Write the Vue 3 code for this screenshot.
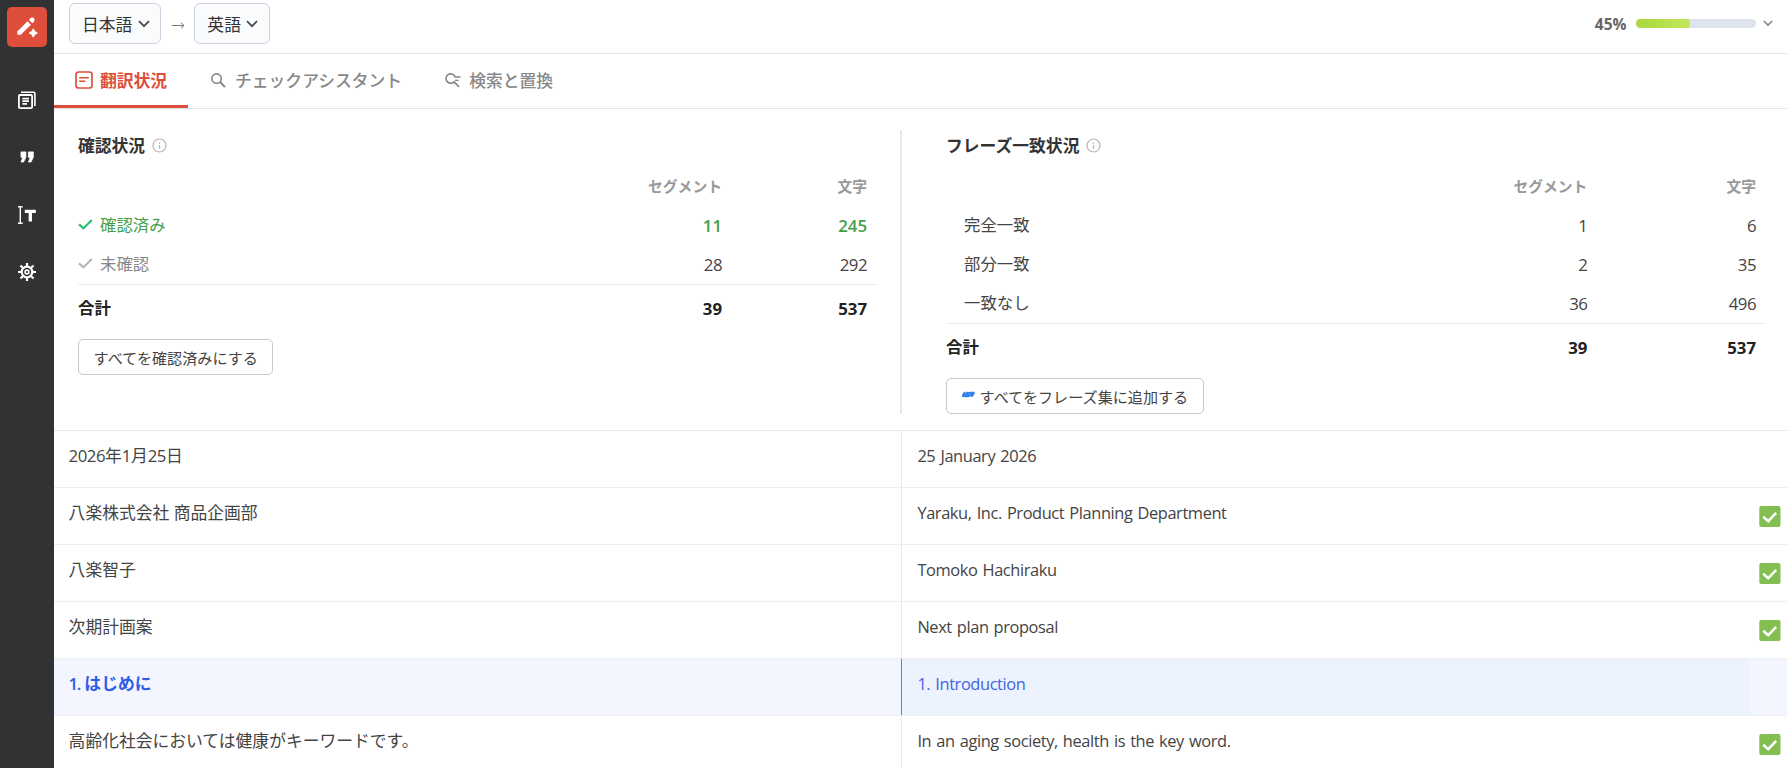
<script setup>
const rows = [
  { id: 1, source: '2026年1月25日', target: '25 January 2026', confirmed: false },
  { id: 2, source: '八楽株式会社 商品企画部', target: 'Yaraku, Inc. Product Planning Department', confirmed: true },
  { id: 3, source: '八楽智子', target: 'Tomoko Hachiraku', confirmed: true },
  { id: 4, source: '次期計画案', target: 'Next plan proposal', confirmed: true },
  { id: 5, source: '1. はじめに', target: '1. Introduction', confirmed: false, active: true },
  { id: 6, source: '高齢化社会においては健康がキーワードです。', target: 'In an aging society, health is the key word.', confirmed: true },
]

// Splits a text into Latin and Japanese runs so each can be spaced on its own
const runs = (text) =>
  (text.match(/[\x21-\x7e]+|[^\x21-\x7e]+/g) || []).map((t) => ({ t, latin: /[\x21-\x7e]/.test(t) }))

const matches = [
  { label: '完全一致', segments: 1, chars: 6 },
  { label: '部分一致', segments: 2, chars: 35 },
  { label: '一致なし', segments: 36, chars: 496 },
]

const progress = 45
</script>

<template>
  <div class="app">
    <nav class="sidebar">
      <div class="logo">
        <svg width="40" height="40" viewBox="0 0 40 40">
          <path d="M12.6 25.6 L22.2 16" stroke="#fff" stroke-width="4.8" fill="none" />
          <path d="M10.6 24.6 L11.5 23.6 L14.6 26.7 L13.6 27.6 H10.6 Z" fill="#fff" stroke="#fff" stroke-width=".5" stroke-linejoin="round" />
          <path d="M23.7 14.5 L25.2 13" stroke="#fff" stroke-width="4.8" />
          <circle cx="25.2" cy="12.8" r="2.4" fill="#fff" />
          <path d="M26.3 22.4 Q26.9 25.4 29.9 26 Q26.9 26.6 26.3 29.6 Q25.7 26.6 22.7 26 Q25.7 25.4 26.3 22.4 Z" fill="#fff" stroke="#fff" stroke-width="1.5" stroke-linejoin="round" />
        </svg>
      </div>
      <svg class="nav-icon" viewBox="0 0 18 18" fill="none" stroke="#fff">
        <rect x=".9" y="4" width="13.2" height="13.1" rx="1.2" stroke-width="1.8" />
        <path d="M3 1.2 H15.6 Q16.9 1.2 16.9 2.5 V15" stroke-width="1.6" />
        <path d="M4.4 7.6 H11 M4.4 10.2 H11 M4.4 12.9 H9" stroke-width="1.7" />
      </svg>
      <svg class="nav-icon" viewBox="0 0 18 18" fill="#fff">
        <path d="M3 3.9 H7.9 V9.2 L5.6 14 H3 L4.9 9.4 H3 Z" stroke="#fff" stroke-width=".8" stroke-linejoin="round" />
        <path d="M10.4 3.9 H15.3 V9.2 L13 14 H10.4 L12.3 9.4 H10.4 Z" stroke="#fff" stroke-width=".8" stroke-linejoin="round" />
      </svg>
      <svg class="nav-icon" viewBox="0 0 18 18" fill="none" stroke="#fff">
        <path d="M2.3 .8 V17.2 M0 .8 H4.7 M0 17.2 H4.7" stroke-width="1.4" />
        <path d="M6.8 5.4 H17.8 M12.3 5 V15.4" stroke-width="3.3" />
      </svg>
      <svg class="nav-icon" viewBox="0 0 18 18" fill="none" stroke="#fff">
        <circle cx="9" cy="9" r="5.3" stroke-width="2.2" />
        <circle cx="9" cy="9" r="1.9" stroke-width="1.6" />
        <path d="M9 0 V3.4 M9 14.6 V18 M0 9 H3.4 M14.6 9 H18 M2.5 2.5 L5 5 M13 13 L15.5 15.5 M2.5 15.5 L5 13 M13 5 L15.5 2.5" stroke-width="2.2" />
      </svg>
    </nav>

    <main class="main">
      <header class="topbar">
        <button class="lang">
          日本語
          <svg width="12" height="8" viewBox="0 0 12 8"><path d="M1 1.2 L6 6.2 L11 1.2" fill="none" stroke="#4a4a4a" stroke-width="1.8" /></svg>
        </button>
        <svg class="arrow" width="13" height="7" viewBox="0 0 13 7"><path d="M0 3.5 H12 M9 .8 L12 3.5 L9 6.2" fill="none" stroke="#777" stroke-width="1" /></svg>
        <button class="lang">
          英語
          <svg width="12" height="8" viewBox="0 0 12 8"><path d="M1 1.2 L6 6.2 L11 1.2" fill="none" stroke="#4a4a4a" stroke-width="1.8" /></svg>
        </button>
        <div class="progress">
          <span class="percent">{{ progress }}%</span>
          <div class="bar"><div class="fill" :style="{ width: progress + '%' }"></div></div>
          <svg width="10" height="7" viewBox="0 0 10 7"><path d="M.8 1 L5 5 L9.2 1" fill="none" stroke="#888" stroke-width="1.7" /></svg>
        </div>
      </header>

      <div class="tabs">
        <div class="tab active">
          <svg width="18" height="18" viewBox="0 0 18 18" fill="none" stroke="#de4f3b">
            <rect x="1" y="1" width="16" height="16" rx="2.6" stroke-width="1.7" />
            <path d="M4.2 6.7 H13.8 M4.2 10.2 H10.4" stroke-width="1.5" />
          </svg>
          <span>翻訳状況</span>
        </div>
        <div class="tab check">
          <svg width="15" height="15" viewBox="0 0 15 15" fill="none" stroke="#888">
            <circle cx="5.6" cy="5.6" r="4.7" stroke-width="1.6" />
            <path d="M9 9 L14 14" stroke-width="1.9" />
          </svg>
          <span>チェックアシスタント</span>
        </div>
        <div class="tab replace">
          <svg width="16" height="15" viewBox="0 0 16 15" fill="none" stroke="#888">
            <path d="M10 3.6 A4.7 4.7 0 1 0 9.6 8.2" stroke-width="1.6" />
            <path d="M8.8 8.6 L14 13.8" stroke-width="1.8" />
            <path d="M9.4 4 H15.6 M10 7.4 H13.6" stroke-width="1.4" />
          </svg>
          <span>検索と置換</span>
        </div>
      </div>

      <section class="panel">
        <div class="stats left">
          <h2>
            確認状況
            <svg width="15" height="15" viewBox="0 0 15 15" fill="none" stroke="#b5b5b5"><circle cx="7.5" cy="7.5" r="6.5" stroke-width="1.2" /><path d="M7.5 4.6 V6 M7.5 7 V10.8" stroke-width="1.2" /></svg>
          </h2>
          <div class="grid head"><span></span><span>セグメント</span><span>文字</span></div>
          <div class="grid done">
            <span class="label"><svg width="15" height="11" viewBox="0 0 15 11"><path d="M1 5.4 L5.4 9.4 L13.8 1" fill="none" stroke="#22c06a" stroke-width="2.1" /></svg>確認済み</span>
            <b>11</b><b>245</b>
          </div>
          <div class="grid todo">
            <span class="label"><svg width="15" height="11" viewBox="0 0 15 11"><path d="M1 5.4 L5.4 9.4 L13.8 1" fill="none" stroke="#b5b5b5" stroke-width="2.1" /></svg>未確認</span>
            <span>28</span><span>292</span>
          </div>
          <div class="grid total"><span>合計</span><b>39</b><b>537</b></div>
          <button class="action">すべてを確認済みにする</button>
        </div>

        <div class="divider"></div>

        <div class="stats right">
          <h2>
            フレーズ一致状況
            <svg width="15" height="15" viewBox="0 0 15 15" fill="none" stroke="#b5b5b5"><circle cx="7.5" cy="7.5" r="6.5" stroke-width="1.2" /><path d="M7.5 4.6 V6 M7.5 7 V10.8" stroke-width="1.2" /></svg>
          </h2>
          <div class="grid head"><span></span><span>セグメント</span><span>文字</span></div>
          <div v-for="m in matches" :key="m.label" class="grid">
            <span class="label indent">{{ m.label }}</span><span>{{ m.segments }}</span><span>{{ m.chars }}</span>
          </div>
          <div class="grid total"><span>合計</span><b>39</b><b>537</b></div>
          <button class="action">
            <svg class="quotes" width="13" height="7" viewBox="0 0 13 7" fill="#2f80ed">
              <path d="M0 6 Q-.2 2.4 2.4 .8 L3.6 .8 L3.2 1.9 L5.6 .6 L6.6 1.3 L9 .4 L10 1 L12 .4 Q13.6 2 12 4 Q11 6 8.8 6.3 L9 5 L6.6 6.2 Z" />
              <path d="M3.4 3.4 L4.2 2.4 M8.2 2.6 L7.4 4.2" stroke="#a8cbfb" stroke-width=".6" />
            </svg>
            <span>すべてをフレーズ集に追加する</span>
          </button>
        </div>
      </section>

      <section class="segments">
        <div v-for="row in rows" :key="row.id" class="row" :class="{ active: row.active }">
          <div class="source"><span v-for="(r, i) in runs(row.source)" :key="i" :class="{ latin: r.latin }">{{ r.t }}</span></div>
          <div class="target">{{ row.target }}</div>
          <div class="status">
            <svg v-if="row.confirmed" width="22" height="21" viewBox="0 0 22 21">
              <rect x=".3" width="21.2" height="21" rx="2" fill="#82bf50" />
              <path d="M4.2 10.7 L9.2 15.2 L17.2 6.8" fill="none" stroke="#fff" stroke-width="2.5" />
            </svg>
          </div>
        </div>
      </section>
    </main>
  </div>
</template>

<style>
body {
  background: #fff;
}
</style>

<style scoped>
.app {
  display: flex;
  height: 768px;
  overflow: hidden;
  font-family: "Open Sans", "Noto Sans CJK JP", sans-serif;
  font-size: 16.8px;
  color: #444;
}
.app * {
  box-sizing: border-box;
}
.sidebar {
  width: 54px;
  flex: none;
  background: #313234;
  display: flex;
  flex-direction: column;
  align-items: center;
  padding-top: 7px;
}
.logo {
  width: 40px;
  height: 40px;
  border-radius: 5px;
  background: #de4f3b;
  margin-bottom: 44px;
}
.logo svg {
  display: block;
}
.nav-icon {
  width: 18px;
  height: 18px;
  margin-bottom: 39.4px;
}
.main {
  flex: 1;
  min-width: 0;
  display: flex;
  flex-direction: column;
}
.main > * {
  flex-shrink: 0;
}
button {
  font: inherit;
  color: inherit;
  cursor: pointer;
}
.topbar {
  height: 54px;
  border-bottom: 1px solid #e2e4f0;
  display: flex;
  align-items: flex-start;
  padding: 3px 14px 0 15px;
}
.lang {
  height: 41px;
  border: 1px solid #cdd0de;
  border-radius: 6px;
  background: #fafbfd;
  color: #333;
  padding: 0 10.5px 0 12px;
  display: flex;
  align-items: center;
  gap: 5.5px;
}
.arrow {
  margin: 19px 9px 0 11px;
}
.progress {
  margin-left: auto;
  height: 41px;
  display: flex;
  align-items: center;
}
.percent {
  font-size: 15.5px;
  font-weight: 700;
  color: #666;
  margin-right: 9.5px;
}
.bar {
  width: 120px;
  height: 9px;
  border-radius: 5px;
  background: #dfe3ed;
  overflow: hidden;
  margin-right: 7px;
}
.fill {
  height: 100%;
  border-radius: 0 2px 2px 0;
  background: linear-gradient(90deg, #aad73f, #c2e85a);
}
.tabs {
  height: 55px;
  border-bottom: 1px solid #e2e4f0;
  display: flex;
}
.tab {
  height: 52px;
  display: flex;
  align-items: center;
  gap: 9px;
  color: #888;
  font-weight: 500;
}
.tab.active {
  height: 54px;
  width: 134px;
  padding-left: 21px;
  gap: 7px;
  color: #de4f3b;
  font-weight: 700;
  border-bottom: 3px solid #de4f3b;
}
.tab.check {
  margin-left: 23px;
}
.tab.replace {
  margin-left: 43px;
  gap: 8px;
}
.panel {
  height: 322px;
  border-bottom: 1px solid #e2e6f2;
  display: flex;
  padding: 21px 22px 0 24px;
}
.left {
  width: 798px;
  --chars: 145px;
}
.divider {
  width: 2px;
  height: 284px;
  margin: 0 44px 0 24px;
  background: #e2e7f0;
}
.right {
  flex: 1;
  --chars: 168.6px;
}
h2 {
  margin: 0 0 7px;
  height: 30px;
  font-size: 16.8px;
  font-weight: 700;
  color: #333;
  display: flex;
  align-items: center;
  gap: 7px;
}
.grid {
  height: 39px;
  display: grid;
  grid-template-columns: 1fr 200px var(--chars);
  align-items: center;
}
.grid > :nth-child(n + 2) {
  text-align: right;
  padding-right: 9px;
  letter-spacing: -0.5px;
}
.grid b {
  font-weight: 700;
  letter-spacing: 0 !important;
}
.head {
  font-size: 14.8px;
  font-weight: 700;
  color: #999;
  padding-bottom: 2px;
}
.head > :nth-child(n + 2) {
  letter-spacing: 0;
}
.label {
  font-size: 16.4px;
  display: flex;
  align-items: center;
  gap: 7px;
  padding-bottom: 3px;
}
.label.indent {
  padding-left: 18px;
}
.done {
  color: #43a047;
}
.done b {
  font-weight: 600;
}
.todo .label {
  color: #888;
}
.total {
  height: 47px;
  border-top: 1px solid #e9eaec;
  color: #222;
  font-weight: 700;
}
.total > :first-child {
  font-size: 16.4px;
  padding-bottom: 2px;
}
.action {
  height: 36px;
  margin-top: 8px;
  border: 1px solid #c8c8c8;
  border-radius: 5px;
  background: #fff;
  font-size: 15.1px;
  padding: 0 14.6px;
  display: flex;
  align-items: center;
  gap: 5px;
}
.quotes {
  margin-bottom: 3px;
}
.segments {
  flex: 1;
}
.row {
  height: 57px;
  display: flex;
  border-bottom: 1px solid #eceef3;
  line-height: 25px;
}
.source {
  width: 847px;
  padding: 12px 14px 0 14.6px;
  white-space: pre-wrap;
}
.latin {
  letter-spacing: -0.5px;
}
.target {
  width: 849px;
  border-left: 1px solid #e4e8f1;
  padding: 12px 15px 0 15.4px;
  font-size: 16.4px;
  letter-spacing: -0.4px;
  word-spacing: 1.2px;
}
.status {
  flex: 1;
  padding: 18px 0 0 9px;
  line-height: 0;
}
.row.active {
  background: #f3f6ff;
}
.row.active .source {
  color: #2f5be7;
  font-weight: 700;
}
.row.active .latin {
  font-weight: 600;
  letter-spacing: -1.4px;
}
.row.active .target {
  background: #edf2ff;
  border-left-color: #5b82ea;
  color: #4165dd;
}
</style>
